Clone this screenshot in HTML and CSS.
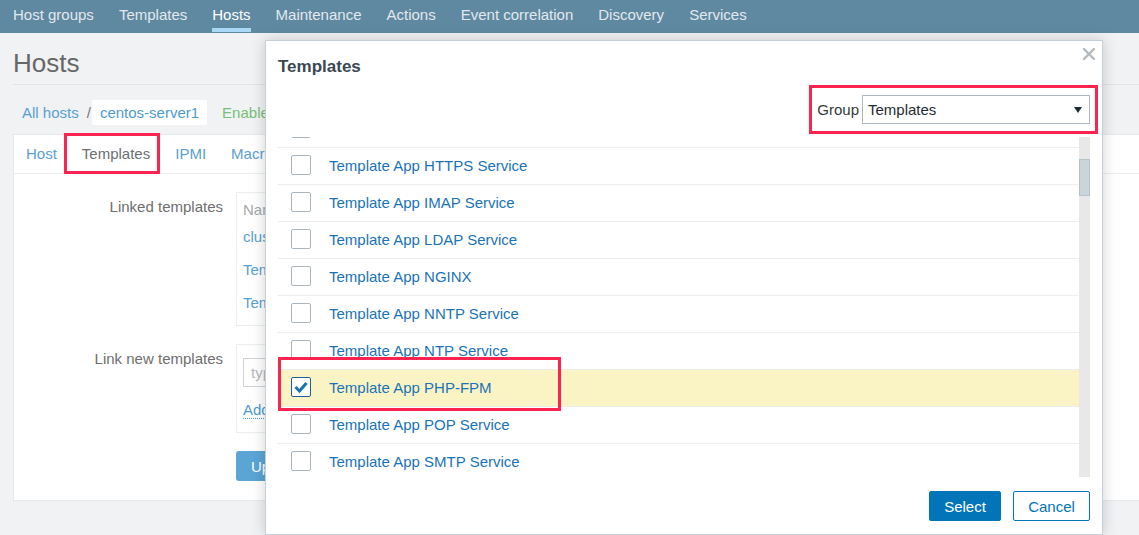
FILE: index.html
```html
<!DOCTYPE html>
<html lang="en">
<head>
<meta charset="utf-8">
<title>Hosts</title>
<link rel="stylesheet" href="styles.css">
</head>
<body>
<nav class="topnav">
  <a href="#">Host groups</a>
  <a href="#">Templates</a>
  <a href="#" class="active">Hosts</a>
  <a href="#">Maintenance</a>
  <a href="#">Actions</a>
  <a href="#">Event correlation</a>
  <a href="#">Discovery</a>
  <a href="#">Services</a>
</nav>

<main class="page">
  <header class="page-header"><h1>Hosts</h1></header>

  <div class="breadcrumbs">
    <a href="#" class="crumb-link">All hosts</a>
    <span class="sep">/</span>
    <span class="crumb-box">centos-server1</span>
    <span class="status">Enabled</span>
  </div>

  <section class="panel">
    <div class="tabs">
      <span class="tab">Host</span>
      <span class="tab active">Templates</span>
      <span class="tab">IPMI</span>
      <span class="tab">Macros</span>
      <span class="tab">Host inventory</span>
      <span class="tab">Encryption</span>
    </div>
    <div class="form">
      <div class="form-label">Linked templates</div>
      <div class="box linked">
        <div class="linked-head">Name</div>
        <div class="linked-row"><a href="#">cluster-template</a></div>
        <div class="linked-row"><a href="#">Template App Zabbix Agent</a></div>
        <div class="linked-row"><a href="#">Template OS Linux</a></div>
      </div>

      <div class="form-label">Link new templates</div>
      <div class="box newbox">
        <div class="search-input">type here to search</div>
        <div class="add-line"><a href="#" class="add-link">Add</a></div>
      </div>

      <div></div>
      <div class="actions"><button class="btn-update">Update</button></div>
    </div>
  </section>
</main>

<div class="modal">
  <h2 class="modal-title">Templates</h2>
  <span class="modal-close">
    <svg width="12" height="12" viewBox="0 0 12 12"><path d="M1 1 L11 11 M11 1 L1 11" stroke="#b3bbc1" stroke-width="2.4" stroke-linecap="square"/></svg>
  </span>

  <div class="group-row">
    <div class="group-field">
      <span class="group-label">Group</span>
      <div class="select">
        <span>Templates</span>
        <svg width="8" height="6" viewBox="0 0 8 6"><path d="M0 0 H8 L4 6 Z" fill="#1f2c33"/></svg>
      </div>
    </div>
  </div>

  <div class="list">
    <div class="rows">
      <div class="rows-inner">
        <div class="row"><span class="cb"></span><a href="#">Template App HTTP Service</a></div>
        <div class="row"><span class="cb"></span><a href="#">Template App HTTPS Service</a></div>
        <div class="row"><span class="cb"></span><a href="#">Template App IMAP Service</a></div>
        <div class="row"><span class="cb"></span><a href="#">Template App LDAP Service</a></div>
        <div class="row"><span class="cb"></span><a href="#">Template App NGINX</a></div>
        <div class="row"><span class="cb"></span><a href="#">Template App NNTP Service</a></div>
        <div class="row"><span class="cb"></span><a href="#">Template App NTP Service</a></div>
        <div class="row selected"><span class="cb checked"><svg width="18" height="18" viewBox="0 0 18 18"><path d="M3.5 9 L7.5 13 L14.5 5" fill="none" stroke="#1a73b7" stroke-width="3"/></svg></span><a href="#">Template App PHP-FPM</a></div>
        <div class="row"><span class="cb"></span><a href="#">Template App POP Service</a></div>
        <div class="row"><span class="cb"></span><a href="#">Template App SMTP Service</a></div>
        <div class="row"><span class="cb"></span><a href="#">Template App SSH Service</a></div>
      </div>
    </div>
    <div class="scrollbar"><div class="thumb"></div></div>
  </div>

  <div class="modal-footer">
    <button class="btn btn-primary">Select</button>
    <button class="btn btn-alt">Cancel</button>
  </div>
</div>
</body>
</html>
```

FILE: styles.css
```css
*, *::before, *::after { box-sizing: border-box; }

body {
  margin: 0;
  width: 1139px;
  height: 535px;
  overflow: hidden;
  position: relative;
  background: #f0f2f4;
  font-family: "Liberation Sans", Arial, sans-serif;
  font-size: 15px;
  color: #1f2c33;
}

a { text-decoration: none; }

/* top navigation */
.topnav {
  display: flex;
  gap: 25px;
  height: 33px;
  padding-left: 13px;
  background: #5f88a1;
}
.topnav a {
  position: relative;
  line-height: 30px;
  color: #e2e9ee;
  white-space: nowrap;
}
.topnav a.active { color: #ffffff; }
.topnav a.active::after {
  content: "";
  position: absolute;
  left: 0;
  right: 0;
  top: 28px;
  height: 4px;
  background: #a9d8f6;
}

/* page */
.page { padding-left: 13px; }

.page-header {
  padding: 14px 0 5px;
  border-bottom: 1px solid #e2e5e8;
}
.page-header h1 {
  margin: 0;
  font-size: 26px;
  line-height: 32px;
  font-weight: normal;
  color: #676767;
}

.breadcrumbs {
  display: flex;
  align-items: center;
  height: 25px;
  margin-top: 15px;
  white-space: nowrap;
}
.crumb-link { color: #5aa0d3; padding-left: 9px; }
.sep { color: #777; margin: 0 1px 0 8px; }
.crumb-box {
  background: #fff;
  height: 25px;
  line-height: 25px;
  padding: 0 8px;
  color: #4d9ad0;
}
.status { color: #79bf79; margin-left: 15px; }

.panel {
  margin-top: 9px;
  width: 1200px;
  background: #fff;
  border: 1px solid #e6e9eb;
}

.tabs {
  display: flex;
  height: 39px;
  border-bottom: 1px solid #ebeef0;
}
.tab {
  position: relative;
  padding: 0 12px;
  margin-right: 1px;
  line-height: 38px;
  color: #5aa0d3;
  white-space: nowrap;
}
.tab.active { color: #6b7075; }
.tab.active::after {
  content: "";
  position: absolute;
  top: -2px;
  bottom: -1px;
  left: -6px;
  right: 2px;
  border: 3px solid #fb2350;
}

.form {
  display: grid;
  grid-template-columns: 209px 1fr;
  column-gap: 13px;
  row-gap: 18px;
  padding: 18px 0 19px;
}
.form-label {
  text-align: right;
  padding-top: 6px;
  line-height: 18px;
  color: #6e6e6e;
}
.box {
  width: 620px;
  border: 1px solid #ebeef0;
}
.linked { padding: 8px 6px 6px; }
.linked-head {
  line-height: 18px;
  margin-bottom: 1px;
  color: #a2a8ad;
}
.linked-row {
  height: 33px;
  line-height: 33px;
}
.linked-row a { color: #5aa0d3; }

.newbox { padding: 13px 6px 13px; }
.search-input {
  width: 460px;
  height: 29px;
  line-height: 27px;
  padding-left: 7px;
  border: 1px solid #cdd3d7;
  color: #b5babe;
}
.add-line {
  margin-top: 14px;
  line-height: 18px;
}
.add-link {
  color: #4f9bd0;
  border-bottom: 1px dotted #4f9bd0;
}
.btn-update {
  height: 30px;
  padding: 0 15px;
  border: 0;
  border-radius: 3px;
  background: #5ba5d5;
  color: #fff;
  font: inherit;
}

/* modal */
.modal {
  position: absolute;
  left: 265px;
  top: 40px;
  width: 838px;
  height: 495px;
  display: flex;
  flex-direction: column;
  padding: 0 12px;
  background: #fff;
  border: 1px solid #c6cfd5;
  box-shadow: 0 0 14px rgba(0, 0, 0, 0.18);
}
.modal-title {
  margin: 0;
  padding-top: 14px;
  font-size: 17px;
  line-height: 24px;
  font-weight: bold;
  color: #3a4853;
}
.modal-close {
  position: absolute;
  top: 7px;
  right: 7px;
  width: 12px;
  height: 12px;
  display: flex;
}

.group-row {
  display: flex;
  justify-content: flex-end;
  margin-top: 16px;
}
.group-field {
  position: relative;
  display: flex;
  align-items: center;
  gap: 3px;
}
.group-field::after {
  content: "";
  position: absolute;
  top: -10px;
  bottom: -10px;
  left: -8px;
  right: -8px;
  border: 3px solid #fb2350;
}
.group-label { color: #2f3a42; }
.select {
  width: 228px;
  height: 29px;
  display: flex;
  align-items: center;
  justify-content: space-between;
  padding: 0 7px 0 5px;
  border: 1px solid #adb8bf;
  color: #1f2c33;
}

.list {
  display: flex;
  height: 340px;
  margin-top: 13px;
}
.rows {
  flex: 1;
  overflow: hidden;
}
.rows-inner { margin-top: -26px; }
.row {
  display: flex;
  align-items: center;
  height: 37px;
  padding: 0 0 2px 13px;
  border-bottom: 1px solid #ebeef0;
}
.row a {
  margin-left: 18px;
  color: #1a73b7;
  white-space: nowrap;
}
.row.selected {
  position: relative;
  background: #faf4c5;
}
.row.selected::after {
  content: "";
  position: absolute;
  left: 0;
  top: -13px;
  bottom: -5px;
  width: 283px;
  border: 3px solid #fb2350;
}
.cb {
  flex: none;
  width: 20px;
  height: 20px;
  display: flex;
  align-items: center;
  justify-content: center;
  border: 1px solid #a9b6be;
  border-radius: 2px;
  background: #fff;
}
.cb.checked { border-color: #1d5f95; }

.scrollbar {
  position: relative;
  width: 11px;
  background: #e8e8e8;
}
.thumb {
  position: absolute;
  top: 22px;
  left: 0;
  right: 0;
  height: 37px;
  background: #cad4db;
  border: 1px solid #b6c2ca;
}

.modal-footer {
  display: flex;
  justify-content: flex-end;
  gap: 12px;
  margin-top: 14px;
}
.btn {
  height: 30px;
  border-radius: 2px;
  font: inherit;
  padding: 0;
}
.btn-primary {
  width: 72px;
  border: 1px solid #0275b8;
  background: #0275b8;
  color: #fff;
}
.btn-alt {
  width: 77px;
  border: 1px solid #0275b8;
  background: #fff;
  color: #0275b8;
}
```
